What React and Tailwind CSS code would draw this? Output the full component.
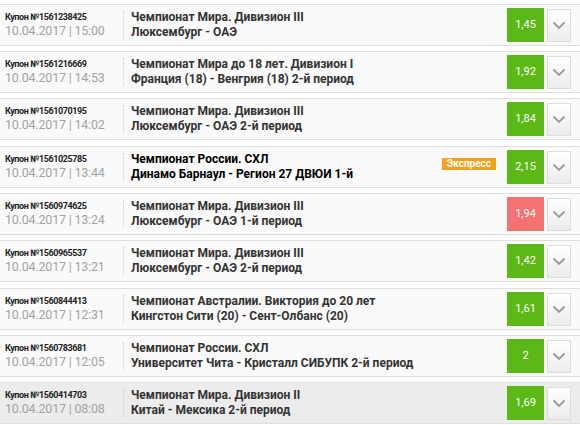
import React from "react";

const rows = [
  { c: "1561238425", t: "15:00", a: "Чемпионат Мира. Дивизион III", b: "Люксембург - ОАЭ", o: "1,45" },
  { c: "1561216669", t: "14:53", a: "Чемпионат Мира до 18 лет. Дивизион I", b: "Франция (18) - Венгрия (18) 2-й период", o: "1,92" },
  { c: "1561070195", t: "14:02", a: "Чемпионат Мира. Дивизион III", b: "Люксембург - ОАЭ 2-й период", o: "1,84", gap: true },
  { c: "1561025785", t: "13:44", a: "Чемпионат России. СХЛ", b: "Динамо Барнаул - Регион 27 ДВЮИ 1-й", o: "2,15", express: true, dark: true },
  { c: "1560974625", t: "13:24", a: "Чемпионат Мира. Дивизион III", b: "Люксембург - ОАЭ 1-й период", o: "1,94", red: true },
  { c: "1560965537", t: "13:21", a: "Чемпионат Мира. Дивизион III", b: "Люксембург - ОАЭ 2-й период", o: "1,42", gap: true },
  { c: "1560844413", t: "12:31", a: "Чемпионат Австралии. Виктория до 20 лет", b: "Кингстон Сити (20) - Сент-Олбанс (20)", o: "1,61" },
  { c: "1560783681", t: "12:05", a: "Чемпионат России. СХЛ", b: "Университет Чита - Кристалл СИБУПК 2-й период", o: "2" },
  { c: "1560414703", t: "08:08", a: "Чемпионат Мира. Дивизион II", b: "Китай - Мексика 2-й период", o: "1,69", hover: true },
];

function Chevron() {
  return (
    <svg width="14" height="9" viewBox="0 0 14 9" fill="none">
      <path d="M1.5 1.5 L7 7 L12.5 1.5" stroke="#9a9a9a" strokeWidth="1.8" />
    </svg>
  );
}

export default function App() {
  return (
    <div className="w-[580px] h-[425px] bg-white overflow-hidden pt-[4px] font-['Roboto',sans-serif]">
      {rows.map((r, i) => (
        <div
          key={i}
          className={`flex items-center h-[42px] border-y border-[#dedede] ${r.gap ? "mb-[6px]" : "mb-[5px]"} ${r.hover ? "bg-[#ececec]" : "bg-[#fafafa]"}`}
        >
          <div className="w-[123px] pl-[5px] shrink-0">
            <div className="text-[9px] font-bold text-[#222] leading-[11px] tracking-[-0.4px]">Купон №{r.c}</div>
            <div className="text-[12.5px] text-[#a3a3a3] leading-[15px] tracking-[-0.2px]">10.04.2017 | {r.t}</div>
          </div>
          <div className="h-[28px] border-l border-dotted border-[#cfcfcf] mr-[7px]" />
          <div className={`flex-1 text-[12px] font-bold leading-[15px] ${r.dark ? "text-black" : "text-[#333]"}`}>
            <div>{r.a}</div>
            <div>{r.b}</div>
          </div>
          {r.express && (
            <div className="bg-[#f4a21c] text-white text-[10px] font-bold leading-[12px] px-[5px] mr-[11px] mb-[6px]">Экспресс</div>
          )}
          <div
            className={`w-[37px] h-[34px] flex items-center justify-center text-[11px] text-white ${r.red ? "bg-[#f57272]" : "bg-[#5cb816]"}`}
          >
            {r.o}
          </div>
          <div className="w-[24px] h-[33px] ml-[3px] mr-[9px] flex items-center justify-center border border-[#dcdcdc] bg-gradient-to-b from-white to-[#ececec]">
            <Chevron />
          </div>
        </div>
      ))}
    </div>
  );
}
